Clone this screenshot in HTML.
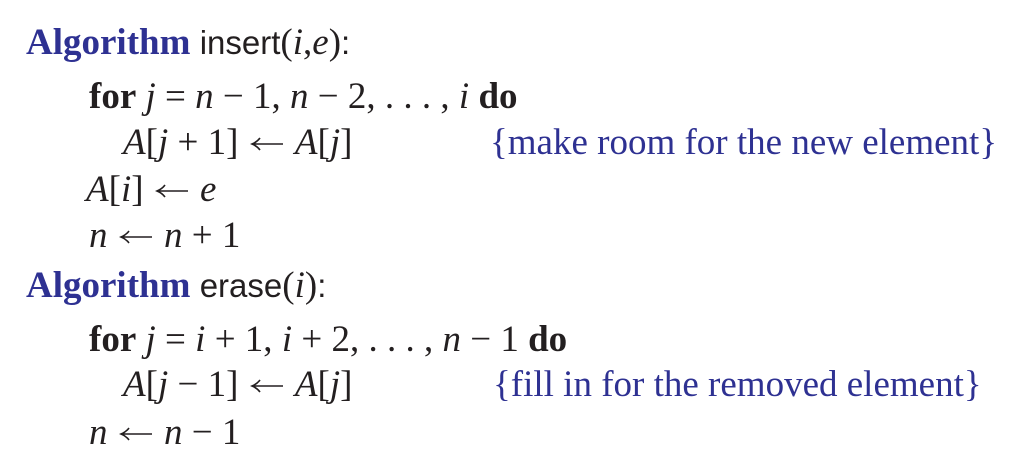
<!DOCTYPE html>
<html><head><meta charset="utf-8"><style>
body{margin:0;width:1015px;height:454px;background:#fff;overflow:hidden;position:relative;font-family:"Liberation Serif",serif;font-size:37px;color:#231f20}
.l{position:absolute;line-height:37px;white-space:nowrap}
.b{color:#2e3192;font-weight:bold}
.s{font-family:"Liberation Sans",sans-serif;font-size:33px}
i{font-style:italic}
.c{color:#2e3192}
svg.a{width:34px;height:14px;vertical-align:3px;margin:0 2px}
</style></head><body>
<svg width="0" height="0" style="position:absolute"><defs><symbol id="ar" viewBox="0 0 34 14"><path d="M3 7H33M10 1Q7 5 2 7Q7 9 10 13" fill="none" stroke="#231f20" stroke-width="1.6"/></symbol></defs></svg>
<div class="l" style="left:26px;top:24px"><span class="b">Algorithm</span> <span class="s">insert</span>(<i>i</i>,<i>e</i>)<span class="s">:</span></div>
<div class="l" style="left:89px;top:78px"><b>for</b> <i>j</i> = <i>n</i> − 1, <i>n</i> − 2, . . . , <i>i</i> <b>do</b></div>
<div class="l" style="left:123px;top:124px"><i>A</i>[<i>j</i> + 1] <svg class="a"><use href="#ar"/></svg> <i>A</i>[<i>j</i>]</div>
<div class="l c" style="left:490px;top:124px">{make room for the new element}</div>
<div class="l" style="left:86px;top:171px"><i>A</i>[<i>i</i>] <svg class="a"><use href="#ar"/></svg> <i>e</i></div>
<div class="l" style="left:89px;top:217px"><i>n</i> <svg class="a"><use href="#ar"/></svg> <i>n</i> + 1</div>
<div class="l" style="left:26px;top:267px"><span class="b">Algorithm</span> <span class="s">erase</span>(<i>i</i>)<span class="s">:</span></div>
<div class="l" style="left:89px;top:321px"><b>for</b> <i>j</i> = <i>i</i> + 1, <i>i</i> + 2, . . . , <i>n</i> − 1 <b>do</b></div>
<div class="l" style="left:123px;top:366px"><i>A</i>[<i>j</i> − 1] <svg class="a"><use href="#ar"/></svg> <i>A</i>[<i>j</i>]</div>
<div class="l c" style="left:493px;top:366px">{fill in for the removed element}</div>
<div class="l" style="left:89px;top:414px"><i>n</i> <svg class="a"><use href="#ar"/></svg> <i>n</i> − 1</div>
</body></html>
